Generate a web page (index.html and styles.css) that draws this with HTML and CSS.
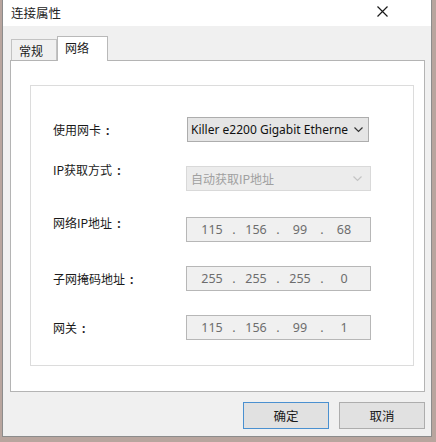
FILE: index.html
```html
<!DOCTYPE html>
<html lang="zh-CN">
<head>
  <meta charset="UTF-8">
  <title>连接属性</title>
  <link rel="stylesheet" href="styles.css">
</head>
<body>
  <div class="window">
    <div class="titlebar">
      <span class="title">连接属性</span>
      <svg class="close" width="11" height="11" viewBox="0 0 11 11">
        <path d="M0.5 0.5 L10.5 10.5 M10.5 0.5 L0.5 10.5" stroke="#1a1a1a" stroke-width="1.2" fill="none"/>
      </svg>
    </div>

    <div class="tabs">
      <div class="tab">常规</div>
      <div class="tab active">网络</div>
    </div>

    <div class="panel">
      <div class="group">
        <div class="row">
          <div class="label">使用网卡<span class="colon">:</span></div>
          <div class="combo">
            <span>Killer e2200 Gigabit Etherne</span>
            <svg class="arrow" width="9" height="6" viewBox="0 0 9 6"><path d="M0.5 0.5 L4.5 4.5 L8.5 0.5" stroke="#333" stroke-width="1.2" fill="none"/></svg>
          </div>
        </div>
        <div class="row">
          <div class="label up">IP获取方式<span class="colon">:</span></div>
          <div class="combo disabled">
            <span>自动获取IP地址</span>
            <svg class="arrow" width="9" height="6" viewBox="0 0 9 6"><path d="M0.5 0.5 L4.5 4.5 L8.5 0.5" stroke="#c4c4c4" stroke-width="1.2" fill="none"/></svg>
          </div>
        </div>
        <div class="row">
          <div class="label up2">网络IP地址<span class="colon">:</span></div>
          <div class="ip">
            <span>115</span><i>.</i><span>156</span><i>.</i><span>99</span><i>.</i><span>68</span>
          </div>
        </div>
        <div class="row">
          <div class="label">子网掩码地址<span class="colon">:</span></div>
          <div class="ip">
            <span>255</span><i>.</i><span>255</span><i>.</i><span>255</span><i>.</i><span>0</span>
          </div>
        </div>
        <div class="row">
          <div class="label">网关<span class="colon">:</span></div>
          <div class="ip">
            <span>115</span><i>.</i><span>156</span><i>.</i><span>99</span><i>.</i><span>1</span>
          </div>
        </div>
      </div>
    </div>

    <div class="buttons">
      <button class="default">确定</button>
      <button>取消</button>
    </div>
  </div>
</body>
</html>
```

FILE: styles.css
```css
body {
  margin: 0;
  background-color: #b8a59e;
  font-family: "Noto Sans", "Noto Sans CJK SC", sans-serif;
  font-size: 12px;
  color: #1a1a1a;
}
.window {
  margin-left: 2px;
  width: 430px;
  height: 437px;
  border: 1px solid #8c8c8c;
  border-top: none;
  background-color: #f0f0f0;
  box-sizing: border-box;
}
.titlebar {
  height: 26px;
  background: white;
  display: flex;
  align-items: center;
  justify-content: space-between;
  padding: 0 43px 0 8px;
}
.title {
  font-family: "Noto Sans CJK SC", sans-serif;
  font-size: 12.5px;
  color: #222;
  margin-top: -2px;
}
.close {
  margin-top: -3px;
}
/* Abas */
.tabs {
  display: flex;
  align-items: flex-end;
  margin-top: 9px;
  padding-left: 8px;
  height: 25px;
  position: relative;
  z-index: 1;
  font-family: "Noto Sans CJK SC", sans-serif;
}
.tab {
  width: 46px;
  height: 21px;
  border: 1px solid #c3c3c3;
  border-bottom: none;
  background: #f0f0f0;
  padding-left: 7px;
  box-sizing: border-box;
  line-height: 22px;
}
.tab.active {
  width: 51px;
  height: 25px;
  background: white;
  border-color: #b9b9b9;
  line-height: 22px;
  padding-left: 7px;
  margin-bottom: -1px;
}
.panel {
  margin-left: 7px;
  width: 415px;
  height: 332px;
  border: 1px solid #b4b4b4;
  background: white;
  box-sizing: border-box;
  padding: 24px 10px 0 19px;
}
.group {
  height: 281px;
  border: 1px solid #dcdcdc;
  box-sizing: border-box;
  padding: 31px 0 0 22px;
}
.row {
  display: flex;
  align-items: center;
  height: 25px;
  margin-bottom: 24px;
}
.row:nth-child(2) {
  margin-bottom: 26px;
}
.label {
  width: 134px;
  flex-shrink: 0;
  font-family: "Noto Sans CJK SC", sans-serif;
  color: #1a1a1a;
}
.colon {
  font-family: "Noto Sans", sans-serif;
  font-weight: bold;
  margin-left: 5px;
}
.label.up {
  margin-top: -18px;
}
.label.up2 {
  margin-top: -14px;
}
.combo {
  width: 182px;
  height: 25px;
  border: 1px solid #adadad;
  background: #e5e5e5;
  box-sizing: border-box;
  display: flex;
  align-items: center;
  padding: 0 5px 0 3px;
  font-size: 12px;
}
.combo span {
  flex: 1;
  white-space: nowrap;
  color: #111;
}
.combo.disabled {
  width: 185px;
  margin-left: -1px;
  border-color: #d9d9d9;
  background: #ececec;
  padding-left: 4px;
  padding-right: 8px;
  font-family: "Noto Sans CJK SC", sans-serif;
}
.combo.disabled span {
  color: #a0a0a0;
}
.arrow {
  flex-shrink: 0;
  margin-left: 2px;
}
.ip {
  width: 185px;
  height: 25px;
  margin-left: -1px;
  border: 1px solid #b7b7b7;
  background: #f0f0f0;
  box-sizing: border-box;
  display: flex;
  align-items: center;
  padding-left: 7px;
  color: #6d6d6d;
  font-size: 12.5px;
}
.ip span {
  width: 36px;
  text-align: center;
}
.ip i {
  font-style: normal;
  width: 8px;
  text-align: center;
}
.buttons {
  display: flex;
  justify-content: flex-end;
  gap: 10px;
  padding: 10px 6px 0 0;
}
button {
  width: 86px;
  height: 27px;
  border: 1px solid #adadad;
  background: #e1e1e1;
  font-family: "Noto Sans CJK SC", sans-serif;
  font-size: 12.5px;
  color: #1a1a1a;
  padding: 0;
}
button.default {
  border-color: #4a90d0;
}
```
